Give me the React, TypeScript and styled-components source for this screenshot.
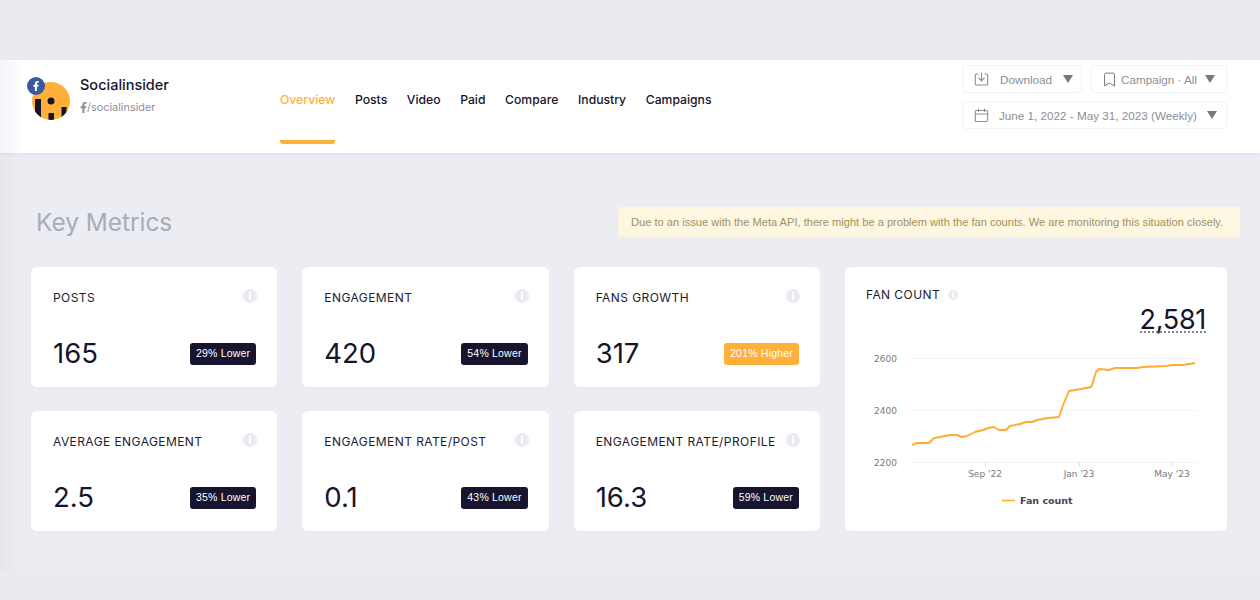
import React from 'react';
import styled, { createGlobalStyle } from 'styled-components';
import { FaFacebookF } from 'react-icons/fa';
import { Bookmark } from 'lucide-react';

const GlobalStyle = createGlobalStyle`
  html, body {
    margin: 0;
    padding: 0;
    background: #e9ebf1;
    font-family: "Inter", "Liberation Sans", sans-serif;
  }
`;

const Page = styled.div`
  width: 1260px;
  height: 600px;
  overflow: hidden;
  padding: 60px 0 30px;
  box-sizing: border-box;
  display: flex;
  flex-direction: column;
`;

const Header = styled.header`
  height: 93px;
  flex: none;
  display: flex;
  background: linear-gradient(90deg, #f3f4f7 0, #ffffff 22px);
  box-shadow: 0 1px 3px rgba(60, 65, 90, 0.08);
  position: relative;
`;

const Brand = styled.div`
  width: 280px;
  flex: none;
  padding: 17px 0 0 27px;
  box-sizing: border-box;
  display: flex;
  gap: 9px;
`;

const AvatarWrap = styled.div`
  position: relative;
  width: 44px;
  height: 44px;
  flex: none;
`;

const FbBadge = styled.span`
  position: absolute;
  left: 0;
  top: 0;
  width: 18px;
  height: 18px;
  border-radius: 50%;
  background: #3c5a9a;
  color: #fff;
  display: flex;
  align-items: center;
  justify-content: center;
  font-size: 10px;
`;

const BrandText = styled.div`
  margin-top: -1px;
`;

const BrandName = styled.div`
  font-size: 14.5px;
  font-weight: 500;
  line-height: 18px;
  color: #17142a;
`;

const Handle = styled.div`
  margin-top: 6px;
  display: flex;
  align-items: center;
  font-size: 10.9px;
  line-height: 14px;
  color: #8f9096;
  svg {
    font-size: 11px;
    margin: 0 -2px;
  }
`;

const Nav = styled.nav`
  display: flex;
  gap: 19.6px;
  flex: none;
`;

const NavItem = styled.a<{ $active?: boolean }>`
  height: 84px;
  padding-top: 31px;
  box-sizing: border-box;
  font-size: 12.2px;
  line-height: 18px;
  font-weight: 500;
  color: ${p => (p.$active ? '#ffb03b' : '#17142a')};
  border-bottom: 4px solid ${p => (p.$active ? '#ffb03b' : 'transparent')};
  border-radius: 0 0 3px 3px;
`;

const Filters = styled.div`
  margin-left: auto;
  margin-right: 33px;
  margin-top: 5px;
  width: 265px;
  display: flex;
  flex-wrap: wrap;
  gap: 8px 9px;
  align-content: flex-start;
`;

const FilterButton = styled.div<{ $width: number; $gap: number }>`
  width: ${p => p.$width}px;
  height: 28px;
  box-sizing: border-box;
  border: 1px solid #f2f3f6;
  border-radius: 4px;
  display: flex;
  align-items: center;
  gap: ${p => p.$gap}px;
  padding: 0 11px;
  font-family: "Liberation Sans", sans-serif;
  font-size: 11.7px;
  color: #8e8e93;
  white-space: nowrap;
  svg {
    flex: none;
  }
`;

const BookmarkIcon = styled(Bookmark)`
  margin-left: -2px;
`;

const Caret = styled.span`
  width: 0;
  height: 0;
  flex: none;
  margin-left: auto;
  border-left: 5px solid transparent;
  border-right: 5px solid transparent;
  border-top: 8px solid #77777c;
`;

const Main = styled.main`
  flex: 1;
  background: linear-gradient(90deg, #e5e7ed 0, #ebedf3 18px);
  padding: 54px 33px 0 31px;
`;

const SectionHead = styled.div`
  display: flex;
  align-items: center;
  justify-content: space-between;
  height: 30px;
  margin-right: -13px;
  padding-left: 5px;
`;

const SectionTitle = styled.h2`
  margin: 0;
  font-size: 24.4px;
  font-weight: 400;
  color: #a9acb8;
`;

const Notice = styled.div`
  height: 30px;
  width: 622px;
  box-sizing: border-box;
  background: #fdf6e0;
  border-radius: 3px;
  color: #a3925f;
  font-family: "Liberation Sans", sans-serif;
  font-size: 11.1px;
  line-height: 30px;
  padding-left: 13px;
  white-space: nowrap;
`;

const Grid = styled.div`
  margin-top: 30px;
  display: grid;
  grid-template-columns: repeat(3, 1fr) 382px;
  grid-template-rows: 120px 120px;
  column-gap: 25px;
  row-gap: 24px;
`;

const Card = styled.div`
  background: #fff;
  border-radius: 6px;
  padding: 23px 21px 0 22px;
  box-sizing: border-box;
`;

const CardTop = styled.div`
  display: flex;
  justify-content: space-between;
  align-items: flex-start;
  height: 53px;
  svg {
    margin: -1px -1px 0 0;
  }
`;

const CardTitle = styled.div`
  font-size: 12px;
  line-height: 16px;
  color: #1d1b30;
  letter-spacing: 0.42px;
  white-space: nowrap;
`;

const CardBottom = styled.div`
  display: flex;
  justify-content: space-between;
  align-items: center;
  height: 22px;
`;

const Value = styled.div`
  font-size: 27.5px;
  line-height: 34px;
  padding-bottom: 2px;
  color: #17142a;
`;

const Badge = styled.span<{ $up?: boolean }>`
  height: 22px;
  padding: 0 6px;
  border-radius: 3px;
  background: ${p => (p.$up ? '#ffb03b' : '#17142f')};
  color: #fff;
  font-family: "Liberation Sans", sans-serif;
  font-size: 10.5px;
  letter-spacing: 0.2px;
  line-height: 20px;
  white-space: nowrap;
`;

const ChartCard = styled(Card)`
  grid-column: 4;
  grid-row: 1 / span 2;
  padding: 20px 21px 0 21px;
`;

const ChartTitleRow = styled.div`
  display: flex;
  align-items: center;
  gap: 8px;
`;

const BigValueRow = styled.div`
  display: flex;
  justify-content: flex-end;
`;

const BigValue = styled.span`
  font-size: 27px;
  letter-spacing: -0.3px;
  line-height: 33px;
  color: #17142a;
  border-bottom: 2px dotted #85858c;
  height: 28px;
`;

const ChartSvg = styled.svg`
  display: block;
  margin: 9px 0 0 -21px;
`;

const Logo = () => (
  <svg width="44" height="44" viewBox="0 0 44 44">
    <defs>
      <clipPath id="logo-clip">
        <circle cx="24" cy="24" r="19" />
      </clipPath>
    </defs>
    <circle cx="24" cy="24" r="19" fill="#ffb03b" />
    <g clipPath="url(#logo-clip)" fill="#17142a">
      <rect x="8" y="22" width="6" height="22" />
      <rect x="21.5" y="36" width="5.5" height="8" />
      <rect x="34.5" y="30" width="5" height="14" />
    </g>
    <circle cx="24" cy="24" r="3.5" fill="#17142a" />
  </svg>
);

const InfoIcon = ({ size = 14 }: { size?: number }) => (
  <svg width={size} height={size} viewBox="0 0 14 14">
    <circle cx="7" cy="7" r="7" fill="#e9ebf1" />
    <circle cx="7" cy="3.9" r="1.2" fill="#fff" />
    <rect x="5.9" y="5.8" width="2.2" height="5.2" fill="#fff" />
  </svg>
);

const DownloadIcon = () => (
  <svg width="15" height="15" viewBox="0 0 15 15" fill="none" stroke="#8e8e93" strokeWidth="1.1" strokeLinecap="round" strokeLinejoin="round">
    <path d="M4 2H2.6A1.3 1.3 0 0 0 1.3 3.3v8.4A1.3 1.3 0 0 0 2.6 13h9.8a1.3 1.3 0 0 0 1.3-1.3V3.3A1.3 1.3 0 0 0 12.4 2H11" />
    <path d="M7.5 1v7.5M4.8 6l2.7 2.8L10.2 6" />
  </svg>
);

const CalendarIcon = () => (
  <svg width="15" height="15" viewBox="0 0 15 15" fill="none" stroke="#8e8e93" strokeWidth="1.1" strokeLinecap="round">
    <rect x="1.3" y="2.5" width="12.4" height="11" rx="1.2" />
    <path d="M1.3 6h12.4M4.5 1v2.5M10.5 1v2.5" />
  </svg>
);

// x,y measured from the card's top-left corner
const linePoints =
  '67,178 72,176 84,176 89,171 95,170 105,168 112,168 117,170 122,169 130,165 138,163 143,161 149,160 154,163 161,163 165,159 175,157 181,155 187,155 192,153 198,152 203,151 214,150 217,141 221,131 224,124 230,123 236,122 246,120 247,118 251,105 254,102 264,103 270,101 277,101 292,101 298,100 322,99 327,98 338,98 350,96';

const FanChart = () => (
  <ChartSvg width="382" height="170" viewBox="0 75 382 170">
    <g stroke="#f1f2f8" strokeWidth="1">
      <line x1="65" x2="352" y1="91.5" y2="91.5" />
      <line x1="65" x2="352" y1="143.5" y2="143.5" />
      <line x1="65" x2="352" y1="195.5" y2="195.5" />
      <line x1="140.5" x2="140.5" y1="195.5" y2="199" stroke="#dcdff5" />
      <line x1="234.5" x2="234.5" y1="195.5" y2="199" stroke="#dcdff5" />
      <line x1="327.5" x2="327.5" y1="195.5" y2="199" stroke="#dcdff5" />
    </g>
    <g fontFamily="'DejaVu Sans', sans-serif" fontSize="9" fill="#77777c">
      <text x="29" y="95">2600</text>
      <text x="29" y="147">2400</text>
      <text x="29" y="199">2200</text>
      <text x="140" y="210" textAnchor="middle">Sep '22</text>
      <text x="234" y="210" textAnchor="middle">Jan '23</text>
      <text x="327" y="210" textAnchor="middle">May '23</text>
    </g>
    <polyline points={linePoints} fill="none" stroke="#ffab33" strokeWidth="1.9" strokeLinejoin="round" />
    <line x1="157" x2="170" y1="233.5" y2="233.5" stroke="#ffab33" strokeWidth="1.6" />
    <text x="175" y="237" fontFamily="'DejaVu Sans', sans-serif" fontSize="9.5" fontWeight="700" fill="#45454c">Fan count</text>
  </ChartSvg>
);

const metrics = [
  { title: 'POSTS', value: '165', badge: '29% Lower' },
  { title: 'ENGAGEMENT', value: '420', badge: '54% Lower' },
  { title: 'FANS GROWTH', value: '317', badge: '201% Higher', up: true },
  { title: 'AVERAGE ENGAGEMENT', value: '2.5', badge: '35% Lower' },
  { title: 'ENGAGEMENT RATE/POST', value: '0.1', badge: '43% Lower' },
  { title: 'ENGAGEMENT RATE/PROFILE', value: '16.3', badge: '59% Lower' },
];

const navItems = ['Overview', 'Posts', 'Video', 'Paid', 'Compare', 'Industry', 'Campaigns'];

export default function App() {
  return (
    <Page>
      <GlobalStyle />
      <Header>
        <Brand>
          <AvatarWrap>
            <Logo />
            <FbBadge>
              <FaFacebookF />
            </FbBadge>
          </AvatarWrap>
          <BrandText>
            <BrandName>Socialinsider</BrandName>
            <Handle>
              <FaFacebookF />
              /socialinsider
            </Handle>
          </BrandText>
        </Brand>
        <Nav>
          {navItems.map((item, i) => (
            <NavItem key={item} $active={i === 0}>
              {item}
            </NavItem>
          ))}
        </Nav>
        <Filters>
          <FilterButton $width={120} $gap={11}>
            <DownloadIcon />
            Download
            <Caret />
          </FilterButton>
          <FilterButton $width={136} $gap={3}>
            <BookmarkIcon size={17} strokeWidth={1.4} color="#77777c" />
            Campaign · All
            <Caret />
          </FilterButton>
          <FilterButton $width={265} $gap={10}>
            <CalendarIcon />
            June 1, 2022 - May 31, 2023 (Weekly)
            <Caret />
          </FilterButton>
        </Filters>
      </Header>
      <Main>
        <SectionHead>
          <SectionTitle>Key Metrics</SectionTitle>
          <Notice>
            Due to an issue with the Meta API, there might be a problem with the fan counts. We are monitoring this situation closely.
          </Notice>
        </SectionHead>
        <Grid>
          {metrics.map(m => (
            <Card key={m.title}>
              <CardTop>
                <CardTitle>{m.title}</CardTitle>
                <InfoIcon />
              </CardTop>
              <CardBottom>
                <Value>{m.value}</Value>
                <Badge $up={m.up}>{m.badge}</Badge>
              </CardBottom>
            </Card>
          ))}
          <ChartCard>
            <ChartTitleRow>
              <CardTitle>FAN COUNT</CardTitle>
              <InfoIcon size={10} />
            </ChartTitleRow>
            <BigValueRow>
              <BigValue>2,581</BigValue>
            </BigValueRow>
            <FanChart />
          </ChartCard>
        </Grid>
      </Main>
    </Page>
  );
}
